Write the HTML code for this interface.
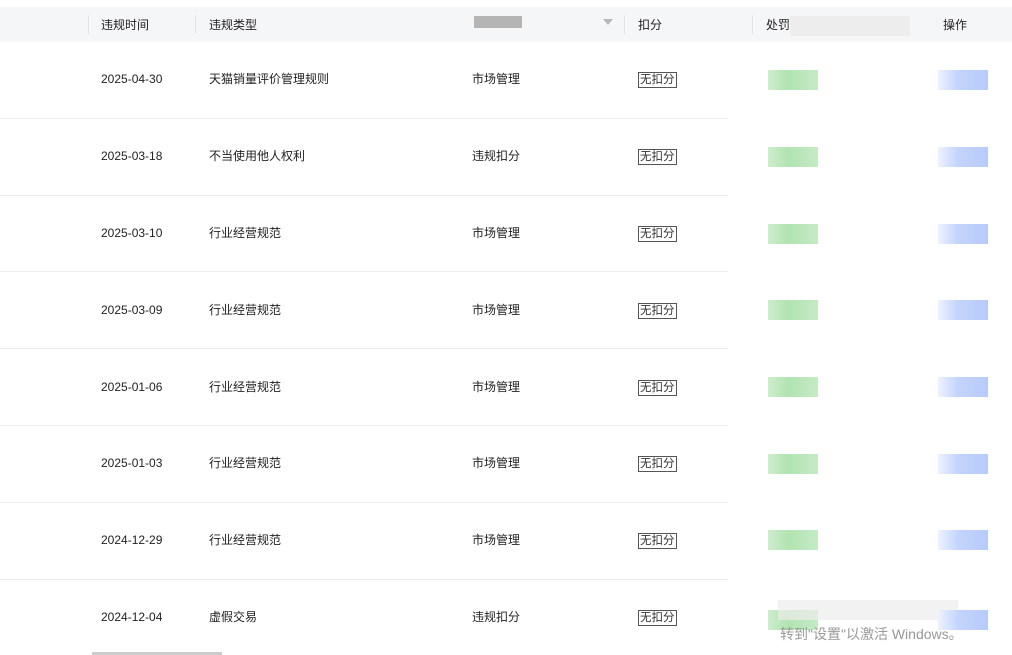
<!DOCTYPE html>
<html><head><meta charset="utf-8"><style>
body{margin:0;width:1012px;height:655px;background:#fff;position:relative;overflow:hidden;font-family:"Liberation Sans","Noto Sans CJK SC",sans-serif;font-size:12px;color:#222}
.a{position:absolute;white-space:nowrap}
.c{position:absolute;white-space:nowrap;margin-top:-2px}
.hd{position:absolute;left:0;top:7px;width:1012px;height:35px;background:#f5f6f8}
.sep{position:absolute;top:15px;width:1px;height:19px;background:#e3e4e8}
.ln{position:absolute;left:0;width:728px;height:1px;background:#ececec}
.bd{position:absolute;left:638px;border:1px solid #555;padding:0 1px;font-size:11.5px;line-height:14px;color:#333;margin-top:1px}
.g{position:absolute;left:768px;width:50px;height:20px;background:linear-gradient(90deg,#c8ecc8,#a9e0a9 40%,#bfe8bf);opacity:.9}
.b{position:absolute;left:938px;width:50px;height:20px;background:linear-gradient(90deg,#eef2ff,#c3d4fb 40%,#b7cbfb)}
</style></head><body>
<div class="hd"></div>
<div class="sep" style="left:88px"></div><div class="sep" style="left:195px"></div><div class="sep" style="left:624px"></div><div class="sep" style="left:752px"></div>
<div class="c" style="left:101px;top:18px">违规时间</div>
<div class="c" style="left:209px;top:18px">违规类型</div>
<div class="a" style="left:474px;top:16px;width:48px;height:12px;background:#b5b5b5"></div>
<div class="a" style="left:603px;top:19px;width:0;height:0;border-left:5px solid transparent;border-right:5px solid transparent;border-top:6px solid #b8b8b8"></div>
<div class="c" style="left:638px;top:18px">扣分</div>
<div class="c" style="left:766px;top:18px">处罚</div>
<div class="a" style="left:790px;top:16px;width:120px;height:20px;background:#e8e8e8;opacity:.6"></div>
<div class="c" style="left:943px;top:18px">操作</div>

<div class="a" style="left:101px;top:72px">2025-04-30</div><div class="c" style="left:209px;top:72px">天猫销量评价管理规则</div><div class="c" style="left:472px;top:72px">市场管理</div><div class="bd" style="top:71px">无扣分</div><div class="g" style="top:70px"></div><div class="b" style="top:70px"></div><div class="ln" style="top:118px"></div>
<div class="a" style="left:101px;top:149px">2025-03-18</div><div class="c" style="left:209px;top:149px">不当使用他人权利</div><div class="c" style="left:472px;top:149px">违规扣分</div><div class="bd" style="top:148px">无扣分</div><div class="g" style="top:147px"></div><div class="b" style="top:147px"></div><div class="ln" style="top:195px"></div>
<div class="a" style="left:101px;top:226px">2025-03-10</div><div class="c" style="left:209px;top:226px">行业经营规范</div><div class="c" style="left:472px;top:226px">市场管理</div><div class="bd" style="top:225px">无扣分</div><div class="g" style="top:224px"></div><div class="b" style="top:224px"></div><div class="ln" style="top:271px"></div>
<div class="a" style="left:101px;top:303px">2025-03-09</div><div class="c" style="left:209px;top:303px">行业经营规范</div><div class="c" style="left:472px;top:303px">市场管理</div><div class="bd" style="top:302px">无扣分</div><div class="g" style="top:300px"></div><div class="b" style="top:300px"></div><div class="ln" style="top:348px"></div>
<div class="a" style="left:101px;top:380px">2025-01-06</div><div class="c" style="left:209px;top:380px">行业经营规范</div><div class="c" style="left:472px;top:380px">市场管理</div><div class="bd" style="top:379px">无扣分</div><div class="g" style="top:377px"></div><div class="b" style="top:377px"></div><div class="ln" style="top:425px"></div>
<div class="a" style="left:101px;top:456px">2025-01-03</div><div class="c" style="left:209px;top:456px">行业经营规范</div><div class="c" style="left:472px;top:456px">市场管理</div><div class="bd" style="top:455px">无扣分</div><div class="g" style="top:454px"></div><div class="b" style="top:454px"></div><div class="ln" style="top:502px"></div>
<div class="a" style="left:101px;top:533px">2024-12-29</div><div class="c" style="left:209px;top:533px">行业经营规范</div><div class="c" style="left:472px;top:533px">市场管理</div><div class="bd" style="top:532px">无扣分</div><div class="g" style="top:530px"></div><div class="b" style="top:530px"></div><div class="ln" style="top:579px"></div>
<div class="a" style="left:101px;top:610px">2024-12-04</div><div class="c" style="left:209px;top:610px">虚假交易</div><div class="c" style="left:472px;top:610px">违规扣分</div><div class="bd" style="top:609px">无扣分</div><div class="g" style="top:610px"></div><div class="a" style="left:778px;top:600px;width:180px;height:20px;background:#ececec;opacity:.7"></div><div class="b" style="top:610px"></div>
<div class="a" style="left:780px;top:624px;font-size:14px;color:#999">转到"设置"以激活 Windows。</div>
<div class="a" style="left:92px;top:652px;width:130px;height:3px;background:#ccc"></div>
</body></html>
